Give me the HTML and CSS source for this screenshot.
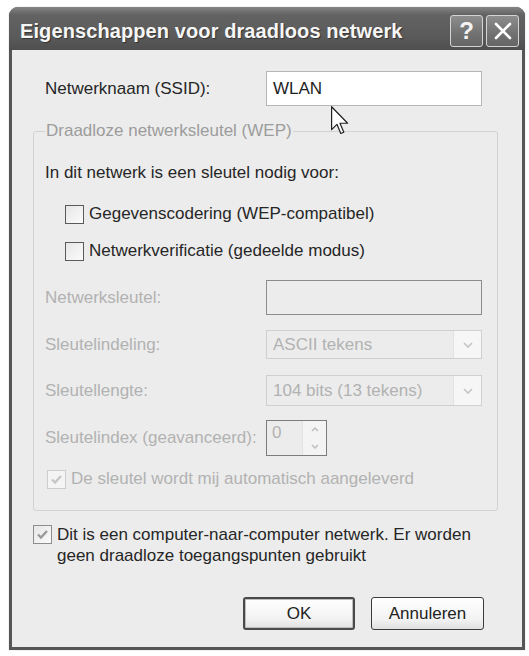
FILE: index.html
```html
<!DOCTYPE html>
<html lang="nl">
<head>
<meta charset="utf-8">
<title>Eigenschappen voor draadloos netwerk</title>
<link rel="stylesheet" href="styles.css">
</head>
<body>
<div class="window">
  <div class="titlebar">
    <span class="title">Eigenschappen voor draadloos netwerk</span>
    <div class="tb-buttons">
      <span class="tb-btn">?</span>
      <span class="tb-btn">
        <svg width="20" height="20" viewBox="0 0 20 20"><path d="M3 3 L17 17 M17 3 L3 17" stroke="#fff" stroke-width="2.6" stroke-linecap="round" fill="none"/></svg>
      </span>
    </div>
  </div>
  <div class="client">
    <div class="form-row ssid-row">
      <span class="lbl">Netwerknaam (SSID):</span>
      <div class="textbox">WLAN</div>
    </div>
    <fieldset class="group">
      <legend>Draadloze netwerksleutel (WEP)</legend>
      <div class="intro">In dit netwerk is een sleutel nodig voor:</div>
      <div class="check-row indent cr1"><span class="cb"></span><span>Gegevenscodering (WEP-compatibel)</span></div>
      <div class="check-row indent cr2"><span class="cb"></span><span>Netwerkverificatie (gedeelde modus)</span></div>
      <div class="form-row key-row disabled">
        <span class="lbl">Netwerksleutel:</span>
        <div class="textbox dis-box"></div>
      </div>
      <div class="form-row sel1-row disabled">
        <span class="lbl">Sleutelindeling:</span>
        <div class="combo h29"><span class="combo-text">ASCII tekens</span><span class="combo-btn"><svg width="12" height="8" viewBox="0 0 12 8"><path d="M2 2 L6 6 L10 2" stroke="#c4c4c4" stroke-width="1.6" fill="none"/></svg></span></div>
      </div>
      <div class="form-row sel2-row disabled">
        <span class="lbl">Sleutellengte:</span>
        <div class="combo h31"><span class="combo-text">104 bits (13 tekens)</span><span class="combo-btn"><svg width="12" height="8" viewBox="0 0 12 8"><path d="M2 2 L6 6 L10 2" stroke="#c4c4c4" stroke-width="1.6" fill="none"/></svg></span></div>
      </div>
      <div class="form-row spin-row disabled">
        <span class="lbl">Sleutelindex (geavanceerd):</span>
        <div class="spin">
          <span class="spin-text">0</span>
          <span class="spin-btns">
            <span class="spin-half"><svg width="10" height="7" viewBox="0 0 10 7"><path d="M2 5 L5 2 L8 5" stroke="#bdbdbd" stroke-width="1.5" fill="none"/></svg></span>
            <span class="spin-half"><svg width="10" height="7" viewBox="0 0 10 7"><path d="M2 2 L5 5 L8 2" stroke="#bdbdbd" stroke-width="1.5" fill="none"/></svg></span>
          </span>
        </div>
      </div>
      <div class="check-row auto-row disabled">
        <span class="cb cb-dis"><svg width="15" height="15" viewBox="0 0 15 15"><path d="M3 7.5 L6 10.5 L12 4" stroke="#c6c6c6" stroke-width="2.4" fill="none"/></svg></span>
        <span>De sleutel wordt mij automatisch aangeleverd</span>
      </div>
    </fieldset>
    <div class="check-row adhoc-row">
      <span class="cb cb-light"><svg width="15" height="15" viewBox="0 0 15 15"><path d="M3 7.5 L6 10.5 L12 4" stroke="#9a9a9a" stroke-width="2.4" fill="none"/></svg></span>
      <span class="adhoc-text">Dit is een computer-naar-computer netwerk. Er worden<br>geen draadloze toegangspunten gebruikt</span>
    </div>
    <div class="buttons">
      <span class="btn default">OK</span>
      <span class="btn">Annuleren</span>
    </div>
  </div>
</div>
<svg class="cursor" width="20" height="29" viewBox="0 0 12 19"><path d="M0.5 0.5 L0.5 15.5 L4 12 L6.5 18 L8.5 17.2 L6 11.3 L11 11.3 Z" fill="#fff" stroke="#222" stroke-width="0.8" stroke-linejoin="round"/></svg>
</body>
</html>
```

FILE: styles.css
```css
html, body {
  margin: 0;
  padding: 0;
  background: #ffffff;
}
body {
  width: 529px;
  height: 656px;
  position: relative;
  overflow: hidden;
  font-family: "Liberation Sans", Arial, sans-serif;
  font-size: 17px;
  color: #262626;
}
.window {
  margin: 7px 0 0 9px;
  width: 516px;
  height: 643px;
  box-sizing: border-box;
  border-radius: 9px 9px 0 0;
  background: #565656;
  display: flex;
  flex-direction: column;
  overflow: hidden;
  box-shadow: 0 0 1px #888;
}
.titlebar {
  height: 43px;
  box-sizing: border-box;
  padding: 8px 6px 0 11px;
  display: flex;
  align-items: flex-start;
  justify-content: space-between;
  background: linear-gradient(#858585 0%, #636363 18%, #5a5a5a 70%, #4e4e4e 100%);
}
.title {
  font-family: "Liberation Sans", Arial, sans-serif;
  font-weight: bold;
  font-size: 20px;
  line-height: 32px;
  color: #f6f6f6;
  text-shadow: 1px 1px 1px #333;
  letter-spacing: 0.1px;
}
.tb-buttons {
  display: flex;
  gap: 3px;
}
.tb-btn {
  width: 33px;
  height: 32px;
  box-sizing: border-box;
  border: 1.5px solid #d4d4d4;
  border-radius: 3px;
  background: linear-gradient(#8d8d8d, #717171 60%, #666666);
  display: flex;
  align-items: center;
  justify-content: center;
  color: #f4f4f4;
  font-weight: bold;
  font-size: 24px;
  line-height: 1;
}
.client {
  flex: 1;
  margin: 0 3px 3px 3px;
  background: #ececec;
  padding: 0 0 0 21px;
  display: flex;
  flex-direction: column;
  align-items: flex-start;
}
.form-row {
  display: grid;
  grid-template-columns: 221px 216px;
  align-items: center;
}
.lbl {
  line-height: 20px;
}
.ssid-row {
  margin-top: 21px;
  margin-left: 12px;
  height: 35px;
}
.textbox {
  height: 35px;
  box-sizing: border-box;
  border: 1px solid #b6b6b6;
  background: #fff;
  padding: 0 6px;
  line-height: 33px;
  color: #1e1e1e;
}
.group {
  margin: 16px 0 0 0;
  width: 465px;
  box-sizing: border-box;
  border: 1px solid #d2d2d2;
  border-radius: 3px;
  padding: 0 15px 21px 11px;
}
.group legend {
  padding: 0 1px;
  line-height: 18px;
  color: #9c9c9c;
}
.disabled {
  color: #b2b2b2;
}
.intro {
  margin-top: 23px;
  line-height: 20px;
}
.check-row {
  display: flex;
  align-items: center;
  gap: 5px;
  line-height: 20px;
}
.cb {
  width: 19px;
  height: 19px;
  box-sizing: border-box;
  border: 1px solid #5a5a5a;
  background: linear-gradient(135deg, #e6e6e6, #fbfbfb);
  display: flex;
  align-items: center;
  justify-content: center;
  flex: none;
}
.cb-dis {
  border-color: #cccccc;
  background: #f4f4f4;
}
.cb-light {
  border-color: #8e8e8e;
}
.indent {
  margin-left: 20px;
}
.cr1 {
  margin-top: 21px;
}
.cr2 {
  margin-top: 17px;
}
.key-row {
  margin-top: 19px;
}
.dis-box {
  background: #ececec;
  border-color: #8c8c8c;
}
.sel1-row {
  margin-top: 15px;
}
.sel2-row {
  margin-top: 16px;
}
.combo {
  box-sizing: border-box;
  border: 1px solid #d0d0d0;
  background: #ececec;
  display: flex;
  align-items: stretch;
}
.h29 { height: 29px; }
.h31 { height: 31px; }
.combo-text {
  flex: 1;
  padding-left: 6px;
  display: flex;
  align-items: center;
}
.combo-btn {
  width: 27px;
  background: #f6f6f6;
  border-left: 1px solid #e2e2e2;
  display: flex;
  align-items: center;
  justify-content: center;
}
.spin-row {
  margin-top: 14px;
}
.spin {
  width: 61px;
  height: 36px;
  box-sizing: border-box;
  border: 1px solid #7c7c7c;
  background: #ececec;
  display: flex;
}
.spin-text {
  flex: 1;
  padding-left: 5px;
  line-height: 24px;
}
.spin-btns {
  width: 23px;
  display: flex;
  flex-direction: column;
  background: #f4f4f4;
  border-left: 1px solid #e4e4e4;
}
.spin-half {
  flex: 1;
  display: flex;
  align-items: center;
  justify-content: center;
}
.auto-row {
  margin-top: 13px;
  margin-left: 2px;
}
.adhoc-row {
  margin-top: 13px;
  align-items: flex-start;
}
.adhoc-row .cb {
  margin-top: 1px;
}
.adhoc-text {
  line-height: 21px;
}
.buttons {
  align-self: stretch;
  margin-top: 31px;
  padding-right: 38px;
  display: flex;
  justify-content: flex-end;
  gap: 16px;
}
.btn {
  width: 113px;
  height: 33px;
  box-sizing: border-box;
  border: 1px solid #3c3c3c;
  border-radius: 3px;
  background: linear-gradient(#ffffff, #f2f2f2 70%, #e0e0e0);
  display: flex;
  align-items: center;
  justify-content: center;
  color: #222222;
}
.btn.default {
  width: 112px;
  border: 2px solid #4a4a4a;
  box-shadow: inset 0 0 0 1px #bdbdbd;
}
.cursor {
  position: absolute;
  left: 330px;
  top: 106px;
}
```
